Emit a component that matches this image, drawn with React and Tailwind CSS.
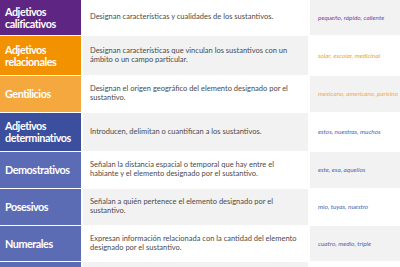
import React from "react";

const rows = [
  { label: ["Adjetivos", "calificativos"], bg: "bg-[#5e2582]", h: "h-[35px]", mid: ["Designan características y cualidades de los sustantivos."], ex: "pequeño, rápido, caliente", exc: "text-[#7a42a4]", midGray: false },
  { label: ["Adjetivos", "relacionales"], bg: "bg-[#f39200]", h: "h-[39px]", mid: ["Designan características que vinculan los sustantivos con un", "ámbito o un campo particular."], ex: "solar, escolar, medicinal", exc: "text-[#f4a02a]", midGray: true },
  { label: ["Gentilicios"], bg: "bg-[#f5a83e]", h: "h-[36px]", mid: ["Designan el origen geográfico del elemento designado por el", "sustantivo."], ex: "mexicano, americano, parisino", exc: "text-[#f4aa45]", midGray: false },
  { label: ["Adjetivos", "determinativos"], bg: "bg-[#3b4f9e]", h: "h-[38px]", mid: ["Introducen, delimitan o cuantifican a los sustantivos."], ex: "estos, nuestras, muchos", exc: "text-[#5064b2]", midGray: true },
  { label: ["Demostrativos"], bg: "bg-[#5b6cb4]", h: "h-[36px]", mid: ["Señalan la distancia espacial o temporal que hay entre el", "habiante y el elemento designado por el sustantivo."], ex: "este, esa, aquellos", exc: "text-[#5064b2]", midGray: false },
  { label: ["Posesivos"], bg: "bg-[#5b6cb4]", h: "h-[36px]", mid: ["Señalan a quién pertenece el elemento designado por el", "sustantivo."], ex: "mío, tuyas, nuestro", exc: "text-[#5064b2]", midGray: true },
  { label: ["Numerales"], bg: "bg-[#5b6cb4]", h: "h-[35px]", mid: ["Expresan información relacionada con la cantidad del elemento", "designado por el sustantivo."], ex: "cuatro, medio, triple", exc: "text-[#5064b2]", midGray: false },
  { label: [""], bg: "bg-[#5b6cb4]", h: "h-[36px]", mid: [""], ex: "", exc: "text-[#5064b2]", midGray: true },
];

export default function App() {
  return (
    <div className="w-[400px] h-[267px] overflow-hidden bg-white flex flex-col gap-px" style={{ fontFamily: "Lato, 'Noto Sans', sans-serif" }}>
      {rows.map((r, i) => (
        <div key={i} className={`flex gap-[2px] shrink-0 ${r.h}`}>
          <div className={`w-[81px] shrink-0 ${r.bg} flex flex-col justify-center pl-[5px] text-white font-bold text-[10.8px] leading-[12px] tracking-[-0.45px]`}>
            {r.label.map((l, j) => (
              <div key={j}>{l}</div>
            ))}
          </div>
          <div className={`w-[225px] shrink-0 ${r.midGray ? "bg-[#f2f2f2]" : "bg-white"} flex flex-col justify-center pl-[7px] text-[#4a4a4a] text-[7.5px] leading-[8.6px] whitespace-nowrap`}>
            {r.mid.map((m, j) => (
              <div key={j}>{m}</div>
            ))}
          </div>
          <div className={`flex-1 ${r.midGray ? "bg-white" : "bg-[#f2f2f2]"} flex items-center pl-[8px] italic text-[6.4px] ${r.exc} whitespace-nowrap`}>
            {r.ex}
          </div>
        </div>
      ))}
    </div>
  );
}
